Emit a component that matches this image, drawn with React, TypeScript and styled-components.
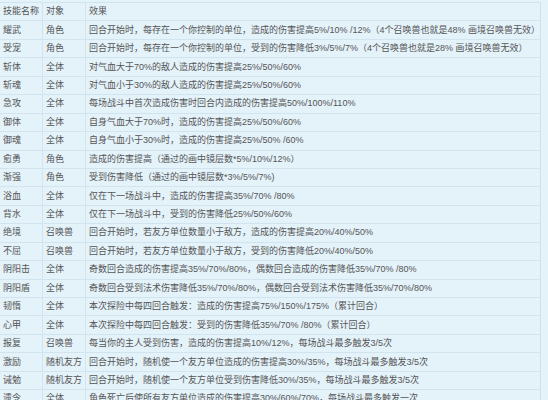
import React from "react";
import styled, { createGlobalStyle } from "styled-components";

const GlobalStyle = createGlobalStyle`
  html, body {
    margin: 0;
    padding: 0;
    background: #e4f2fa;
  }
  body {
    font-family: "Liberation Sans", "Noto Sans CJK SC", sans-serif;
  }
`;

const Page = styled.div`
  width: 548px;
  height: 400px;
  overflow: hidden;
  background: #e4f2fa;
  padding-top: 2px;
  box-sizing: border-box;
`;

const Table = styled.div`
  width: 541px;
  border-top: 1px solid #d2e4ef;
  border-right: 1px solid #cfe1ec;
  box-sizing: border-box;
`;

const Row = styled.div`
  display: grid;
  grid-template-columns: 43px 43px 1fr;
  height: 18.45px;
  box-sizing: border-box;
  border-bottom: 1px solid #d2e4ef;
`;

const Cell = styled.div<{ $last?: boolean }>`
  display: flex;
  align-items: center;
  padding-left: 3px;
  box-sizing: border-box;
  font-family: "Liberation Sans", "Noto Sans CJK SC", sans-serif;
  font-size: 9px;
  line-height: 1;
  color: #555555;
  white-space: nowrap;
  overflow: hidden;
  border-right: ${(p) => (p.$last ? "none" : "1px solid #d2e4ef")};
`;

const rows: [string, string, string][] = [
  ["技能名称", "对象", "效果"],
  ["耀武", "角色", "回合开始时，每存在一个你控制的单位，造成的伤害提高5%/10% /12%（4个召唤兽也就是48% 画境召唤兽无效）"],
  ["受宠", "角色", "回合开始时，每存在一个你控制的单位，受到的伤害降低3%/5%/7%（4个召唤兽也就是28% 画境召唤兽无效）"],
  ["斩体", "全体", "对气血大于70%的敌人造成的伤害提高25%/50%/60%"],
  ["斩魂", "全体", "对气血小于30%的敌人造成的伤害提高25%/50%/60%"],
  ["急攻", "全体", "每场战斗中首次造成伤害时回合内造成的伤害提高50%/100%/110%"],
  ["御体", "全体", "自身气血大于70%时，造成的伤害提高25%/50%/60%"],
  ["御魂", "全体", "自身气血小于30%时，造成的伤害提高25%/50% /60%"],
  ["愈勇", "角色", "造成的伤害提高（通过的画中镜层数*5%/10%/12%）"],
  ["渐强", "角色", "受到伤害降低（通过的画中镜层数*3%/5%/7%)"],
  ["浴血", "全体", "仅在下一场战斗中，造成的伤害提高35%/70% /80%"],
  ["背水", "全体", "仅在下一场战斗中，受到的伤害降低25%/50%/60%"],
  ["绝境", "召唤兽", "回合开始时，若友方单位数量小于敌方，造成的伤害提高20%/40%/50%"],
  ["不屈", "召唤兽", "回合开始时，若友方单位数量小于敌方，受到的伤害降低20%/40%/50%"],
  ["阴阳击", "全体", "奇数回合造成的伤害提高35%/70%/80%，偶数回合造成的伤害降低35%/70% /80%"],
  ["阴阳盾", "全体", "奇数回合受到法术伤害降低35%/70%/80%，偶数回合受到法术伤害降低35%/70%/80%"],
  ["韧惰", "全体", "本次探险中每四回合触发：造成的伤害提高75%/150%/175%（累计回合）"],
  ["心甲", "全体", "本次探险中每四回合触发：受到的伤害降低35%/70% /80%（累计回合）"],
  ["报复", "召唤兽", "每当你的主人受到伤害，造成的伤害提高10%/12%，每场战斗最多触发3/5次"],
  ["激励", "随机友方", "回合开始时，随机使一个友方单位造成的伤害提高30%/35%，每场战斗最多触发3/5次"],
  ["诫勉", "随机友方", "回合开始时，随机使一个友方单位受到伤害降低30%/35%，每场战斗最多触发3/5次"],
  ["遗令", "全体", "角色死亡后使所有友方单位造成的伤害提高30%/60%/70%，每场战斗最多触发一次"],
];

export default function App() {
  return (
    <>
      <GlobalStyle />
      <Page>
        <Table>
          {rows.map(([name, target, effect], i) => (
            <Row key={i}>
              <Cell>{name}</Cell>
              <Cell>{target}</Cell>
              <Cell $last>{effect}</Cell>
            </Row>
          ))}
        </Table>
      </Page>
    </>
  );
}
